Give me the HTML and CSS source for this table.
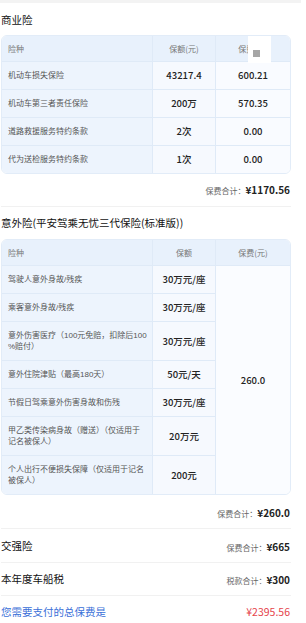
FILE: index.html
```html
<!DOCTYPE html>
<html lang="zh-CN">
<head>
<meta charset="utf-8">
<title>保费明细</title>
<link rel="stylesheet" href="styles.css">
</head>
<body>
<div class="topbar"></div>
<div class="page">
  <section class="block sec-a">
    <h2 class="title">商业险</h2>
    <div class="table-wrap">
      <table class="tbl">
        <colgroup><col class="w1"><col class="w2"><col class="w3"></colgroup>
        <thead>
          <tr><th class="c1">险种</th><th class="c2">保额(元)</th><th class="c3">保费(元)</th></tr>
        </thead>
        <tbody>
          <tr><td class="c1">机动车损失保险</td><td class="c2">43217.4</td><td class="c3">600.21</td></tr>
          <tr><td class="c1">机动车第三者责任保险</td><td class="c2">200万</td><td class="c3">570.35</td></tr>
          <tr><td class="c1">道路救援服务特约条款</td><td class="c2">2次</td><td class="c3">0.00</td></tr>
          <tr class="last"><td class="c1">代为送检服务特约条款</td><td class="c2">1次</td><td class="c3">0.00</td></tr>
        </tbody>
      </table>
      <div class="overlay"><span class="sq"></span></div>
    </div>
    <div class="subtotal"><span class="lbl">保费合计：</span><span class="val">¥1170.56</span></div>
  </section>

  <section class="block sec-b">
    <h2 class="title">意外险(平安驾乘无忧三代保险(标准版))</h2>
    <div class="table-wrap">
      <table class="tbl">
        <colgroup><col class="w1"><col class="w2"><col class="w3"></colgroup>
        <thead>
          <tr><th class="c1">险种</th><th class="c2">保额</th><th class="c3">保费(元)</th></tr>
        </thead>
        <tbody>
          <tr><td class="c1">驾驶人意外身故/残疾</td><td class="c2">30万元/座</td><td class="c3 merged" rowspan="7">260.0</td></tr>
          <tr><td class="c1">乘客意外身故/残疾</td><td class="c2">30万元/座</td></tr>
          <tr><td class="c1">意外伤害医疗（100元免赔，扣除后100<wbr>%赔付）</td><td class="c2">30万元/座</td></tr>
          <tr><td class="c1">意外住院津贴（最高180天）</td><td class="c2">50元/天</td></tr>
          <tr><td class="c1">节假日驾乘意外伤害身故和伤残</td><td class="c2">30万元/座</td></tr>
          <tr><td class="c1">甲乙类传染病身故（赠送）（仅适用于记名被保人）</td><td class="c2">20万元</td></tr>
          <tr class="last"><td class="c1">个人出行不便损失保障（仅适用于记名被保人）</td><td class="c2">200元</td></tr>
        </tbody>
      </table>
    </div>
    <div class="subtotal"><span class="lbl">保费合计：</span><span class="val">¥260.0</span></div>
  </section>

  <section class="block line-row row-jq">
    <h2 class="title">交强险</h2>
    <div class="sum"><span class="lbl">保费合计：</span><span class="val">¥665</span></div>
  </section>

  <section class="block line-row row-tax">
    <h2 class="title">本年度车船税</h2>
    <div class="sum"><span class="lbl">税款合计：</span><span class="val">¥300</span></div>
  </section>

  <section class="line-row row-total">
    <span class="total-lbl">您需要支付的总保费是</span>
    <span class="total-val">¥2395.56</span>
  </section>
</div>
</body>
</html>
```

FILE: styles.css
```css
* {
  box-sizing: border-box;
  margin: 0;
  padding: 0;
}

html, body {
  background: #ffffff;
}

body {
  width: 306px;
  font-family: "Noto Sans CJK SC", sans-serif;
  color: #333333;
}

.topbar {
  height: 3px;
  width: 301px;
  background: #f3f3f3;
}

.page {
  width: 291px;
  padding-left: 1px;
}

.block {
  border-bottom: 1px solid #f1f1f1;
}

.sec-a {
  padding: 10px 0 9px;
}

.sec-b {
  padding: 9px 0 8px;
}

.title {
  font-size: 10.5px;
  line-height: 14px;
  font-weight: 400;
  color: #111111;
}

.table-wrap {
  position: relative;
  margin-top: 8px;
  border: 1px solid #e2ecf8;
  border-radius: 6px;
  overflow: hidden;
}

.sec-b .table-wrap {
  margin-top: 9px;
}

.tbl {
  width: 100%;
  table-layout: fixed;
  border-collapse: separate;
  border-spacing: 0;
}

.w1 { width: 151px; }
.w2 { width: 63px; }
.w3 { width: 74px; }

.tbl th,
.tbl td {
  border-bottom: 1px solid #dfeaf7;
  vertical-align: middle;
}

.tbl .c1,
.tbl .c2 {
  border-right: 1px solid #dfeaf7;
}

.tbl th {
  background: #e8f1fc;
  font-size: 8px;
  line-height: 11px;
  font-weight: 400;
  color: #777777;
  padding: 7px 4px;
  text-align: center;
}

.tbl th.c1 {
  text-align: left;
  padding-left: 6px;
}

.tbl td.c1 {
  background: #edf4fd;
  font-family: "Liberation Sans", "Noto Sans CJK SC", sans-serif;
  font-size: 8px;
  line-height: 11px;
  color: #555555;
  padding: 8px 4.5px 8px 6px;
  text-align: left;
  word-break: break-all;
}

.tbl td.c2 {
  background: #f6f9fe;
  font-size: 9.5px;
  line-height: 11px;
  font-weight: 500;
  color: #222222;
  text-align: center;
  padding: 0 2px;
}

.tbl td.c3 {
  background: #f9fbff;
  font-size: 9.5px;
  line-height: 11px;
  font-weight: 500;
  color: #222222;
  text-align: center;
  padding: 0 2px;
}

.tbl td.merged {
  border-bottom: none;
  background: #fafcff;
}

.tbl tr.last td {
  border-bottom: none;
}

.overlay {
  position: absolute;
  left: 246px;
  top: 0;
  width: 23px;
  height: 27px;
  background: #ffffff;
}

.overlay .sq {
  position: absolute;
  left: 5px;
  top: 14px;
  width: 7px;
  height: 7px;
  background: #a6a6a6;
}

.subtotal {
  margin-top: 7px;
  text-align: right;
  line-height: 12px;
  padding-right: 1px;
}

.sec-b .subtotal {
  margin-top: 9px;
}

.lbl {
  font-size: 8px;
  color: #666666;
}

.val {
  font-size: 10px;
  font-weight: 700;
  color: #222222;
}

.line-row {
  display: flex;
  justify-content: space-between;
  align-items: center;
}

.row-jq {
  padding: 9px 0 8px;
}

.row-tax {
  padding: 8px 0 8px;
}

.row-total {
  padding: 9px 0 0;
  line-height: 14px;
}

.sum {
  line-height: 12px;
  padding-right: 1px;
}

.total-lbl {
  font-size: 10.5px;
  color: #3a6fd8;
}

.total-val {
  font-size: 10.5px;
  color: #e5434b;
  padding-right: 1px;
}
```
